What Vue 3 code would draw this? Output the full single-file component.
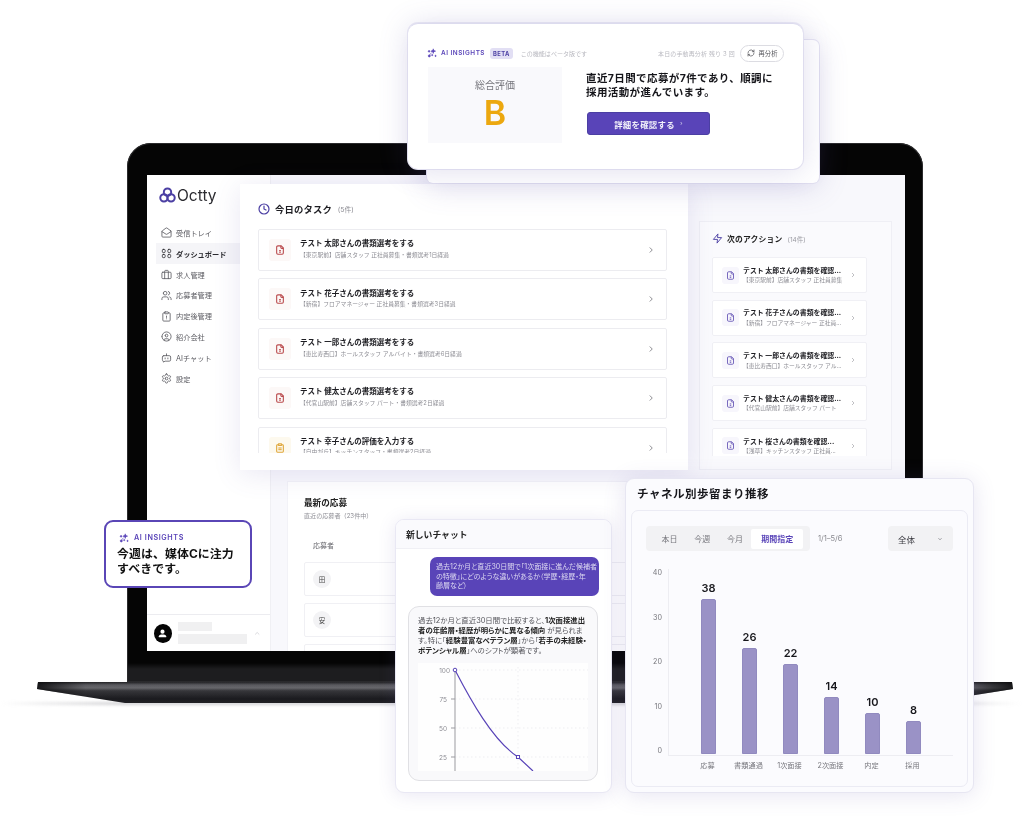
<script setup>
const icons = {
  inbox: ['M21.2 8.4c.5.38.8.97.8 1.6v10a2 2 0 0 1-2 2H4a2 2 0 0 1-2-2V10a2 2 0 0 1 .8-1.6l8-6a2 2 0 0 1 2.4 0l8 6Z', 'm22 10-8.97 5.7a1.94 1.94 0 0 1-2.06 0L2 10'],
  grid: ['M5 3h2a2 2 0 0 1 2 2v3a2 2 0 0 1-2 2H5a2 2 0 0 1-2-2V5a2 2 0 0 1 2-2Z', 'M17 3h2a2 2 0 0 1 2 2v3a2 2 0 0 1-2 2h-2a2 2 0 0 1-2-2V5a2 2 0 0 1 2-2Z', 'M5 14h2a2 2 0 0 1 2 2v3a2 2 0 0 1-2 2H5a2 2 0 0 1-2-2v-3a2 2 0 0 1 2-2Z', 'M17 14h2a2 2 0 0 1 2 2v3a2 2 0 0 1-2 2h-2a2 2 0 0 1-2-2v-3a2 2 0 0 1 2-2Z'],
  briefcase: ['M4 7h16a2 2 0 0 1 2 2v10a2 2 0 0 1-2 2H4a2 2 0 0 1-2-2V9a2 2 0 0 1 2-2Z', 'M16 21V5a2 2 0 0 0-2-2h-4a2 2 0 0 0-2 2v16'],
  users: ['M16 21v-2a4 4 0 0 0-4-4H6a4 4 0 0 0-4 4v2', 'M5 7a4 4 0 1 0 8 0a4 4 0 1 0-8 0', 'M22 21v-2a4 4 0 0 0-3-3.87', 'M16 3.13a4 4 0 0 1 0 7.75'],
  clipboard: ['M9 2h6a1 1 0 0 1 1 1v2a1 1 0 0 1-1 1H9a1 1 0 0 1-1-1V3a1 1 0 0 1 1-1Z', 'M16 4h2a2 2 0 0 1 2 2v14a2 2 0 0 1-2 2H6a2 2 0 0 1-2-2V6a2 2 0 0 1 2-2h2', 'M12 11v3', 'M12 17h.01'],
  company: ['M2 12a10 10 0 1 0 20 0a10 10 0 1 0-20 0', 'M9 10a3 3 0 1 0 6 0a3 3 0 1 0-6 0', 'M7 20.662V19a2 2 0 0 1 2-2h6a2 2 0 0 1 2 2v1.662'],
  bot: ['M6 8h12a3 3 0 0 1 3 3v6a3 3 0 0 1-3 3H9l-4 2v-2.2A3 3 0 0 1 3 17v-6a3 3 0 0 1 3-3Z', 'M12 8V4', 'M9 13v2', 'M15 13v2'],
  gear: ['M12.22 2h-.44a2 2 0 0 0-2 2v.18a2 2 0 0 1-1 1.73l-.43.25a2 2 0 0 1-2 0l-.15-.08a2 2 0 0 0-2.73.73l-.22.38a2 2 0 0 0 .73 2.73l.15.1a2 2 0 0 1 1 1.72v.51a2 2 0 0 1-1 1.74l-.15.09a2 2 0 0 0-.73 2.73l.22.38a2 2 0 0 0 2.73.73l.15-.08a2 2 0 0 1 2 0l.43.25a2 2 0 0 1 1 1.73V20a2 2 0 0 0 2 2h.44a2 2 0 0 0 2-2v-.18a2 2 0 0 1 1-1.73l.43-.25a2 2 0 0 1 2 0l.15.08a2 2 0 0 0 2.73-.73l.22-.39a2 2 0 0 0-.73-2.73l-.15-.08a2 2 0 0 1-1-1.74v-.5a2 2 0 0 1 1-1.74l.15-.09a2 2 0 0 0 .73-2.73l-.22-.38a2 2 0 0 0-2.73-.73l-.15.08a2 2 0 0 1-2 0l-.43-.25a2 2 0 0 1-1-1.73V4a2 2 0 0 0-2-2z', 'M9 12a3 3 0 1 0 6 0a3 3 0 1 0-6 0'],
  file: ['M15 2H7a3 3 0 0 0-3 3v14a3 3 0 0 0 3 3h10a3 3 0 0 0 3-3V7Z', 'M14 2v4a2 2 0 0 0 2 2h4', 'M10 13h4', 'M10 17h4'],
  clip: ['M9 2h6a1 1 0 0 1 1 1v2a1 1 0 0 1-1 1H9a1 1 0 0 1-1-1V3a1 1 0 0 1 1-1Z', 'M16 4h2a2 2 0 0 1 2 2v14a2 2 0 0 1-2 2H6a2 2 0 0 1-2-2V6a2 2 0 0 1 2-2h2', 'M8 12h8', 'M8 16h8'],
  clock: ['M2 12a10 10 0 1 0 20 0a10 10 0 1 0-20 0', 'M12 6v6l4 2'],
  bolt: ['M13 2 3 14h9l-1 8 10-12h-9l1-8z'],
  chevron: ['m9 18 6-6-6-6'],
  down: ['m6 9 6 6 6-6'],
  up: ['m6 15 6-6 6 6'],
  refresh: ['M3 12a9 9 0 0 1 15-6.7L21 8', 'M21 3v5h-5', 'M21 12a9 9 0 0 1-15 6.7L3 16', 'M8 16H3v5'],
}

const navItems = [
  { label: '受信トレイ', icon: 'inbox' },
  { label: 'ダッシュボード', icon: 'grid', active: true },
  { label: '求人管理', icon: 'briefcase' },
  { label: '応募者管理', icon: 'users' },
  { label: '内定後管理', icon: 'clipboard' },
  { label: '紹介会社', icon: 'company' },
  { label: 'AIチャット', icon: 'bot' },
  { label: '設定', icon: 'gear' },
]

const tasks = [
  { title: 'テスト 太郎さんの書類選考をする', sub: '【東京駅前】店舗スタッフ 正社員募集・書類選考1日経過', icon: 'file', tone: 'red' },
  { title: 'テスト 花子さんの書類選考をする', sub: '【新宿】フロアマネージャー 正社員募集・書類選考3日経過', icon: 'file', tone: 'red' },
  { title: 'テスト 一郎さんの書類選考をする', sub: '【恵比寿西口】ホールスタッフ アルバイト・書類選考6日経過', icon: 'file', tone: 'red' },
  { title: 'テスト 健太さんの書類選考をする', sub: '【代官山駅前】店舗スタッフ パート・書類選考2日経過', icon: 'file', tone: 'red' },
  { title: 'テスト 幸子さんの評価を入力する', sub: '【自由が丘】キッチンスタッフ・書類選考2日経過', icon: 'clip', tone: 'amber' },
]

const actions = [
  { title: 'テスト 太郎さんの書類を確認...', sub: '【東京駅前】店舗スタッフ 正社員募集' },
  { title: 'テスト 花子さんの書類を確認...', sub: '【新宿】フロアマネージャー 正社員...' },
  { title: 'テスト 一郎さんの書類を確認...', sub: '【恵比寿西口】ホールスタッフ アル...' },
  { title: 'テスト 健太さんの書類を確認...', sub: '【代官山駅前】店舗スタッフ パート' },
  { title: 'テスト 桜さんの書類を確認...', sub: '【浅草】キッチンスタッフ 正社員...' },
]

const applicants = ['田', '安', '']

const tabs = ['本日', '今週', '今月', '期間指定']
const yTicks = [40, 30, 20, 10, 0]
const funnel = [
  { label: '応募', value: 38 },
  { label: '書類通過', value: 26 },
  { label: '1次面接', value: 22 },
  { label: '2次面接', value: 14 },
  { label: '内定', value: 10 },
  { label: '採用', value: 8 },
]
const barHeight = (v) => Math.round(v * 4.08) + 'px'
</script>

<template>
  <div class="stage">
    <!-- laptop -->
    <div class="laptop">
      <div class="screen">
        <aside class="sidebar">
          <div class="logo">
            <svg width="17" height="16" viewBox="0 0 24 22" fill="none" stroke="#4b3fa3" stroke-width="2.800">
              <circle cx="12" cy="7" r="5.200" />
              <circle cx="7" cy="15" r="5.200" />
              <circle cx="17" cy="15" r="5.200" />
            </svg>
            <span>Octty</span>
          </div>
          <nav class="nav">
            <div v-for="item in navItems" :key="item.label" class="nav-item" :class="{ active: item.active }">
              <svg width="11" height="11" viewBox="0 0 24 24" fill="none" stroke="currentColor" stroke-width="1.800" stroke-linecap="round" stroke-linejoin="round">
                <path v-for="d in icons[item.icon]" :key="d" :d="d" />
              </svg>
              <span>{{ item.label }}</span>
            </div>
          </nav>
          <div class="side-user">
            <div class="avatar">
              <svg width="11" height="11" viewBox="0 0 24 24" fill="#fff">
                <circle cx="12" cy="8" r="4.500" />
                <path d="M4 20v-2c0-2 3-4 5-4h6c2 0 5 2 5 4v2Z" />
              </svg>
            </div>
            <div class="skeletons">
              <i class="sk-a"></i>
              <i class="sk-b"></i>
            </div>
            <svg class="user-chev" width="9" height="9" viewBox="0 0 24 24" fill="none" stroke="#c9c9cf" stroke-width="2">
              <path :d="icons.up[0]" />
            </svg>
          </div>
        </aside>

        <div class="main">
          <div class="main-top">
            <section class="next-panel">
              <div class="next-head">
                <svg width="11" height="11" viewBox="0 0 24 24" fill="none" stroke="#4b3fa3" stroke-width="2" stroke-linejoin="round">
                  <path :d="icons.bolt[0]" />
                </svg>
                <b>次のアクション</b>
                <small>(14件)</small>
              </div>
              <div class="next-list">
                <div v-for="a in actions" :key="a.title" class="next-row">
                  <span class="next-tile">
                    <svg width="9" height="9" viewBox="0 0 24 24" fill="none" stroke="#6a5ab8" stroke-width="2.400" stroke-linejoin="round">
                      <path v-for="d in icons.file" :key="d" :d="d" />
                    </svg>
                  </span>
                  <div class="next-text">
                    <b>{{ a.title }}</b>
                    <small>{{ a.sub }}</small>
                  </div>
                  <svg width="8" height="8" viewBox="0 0 24 24" fill="none" stroke="#a8a8ae" stroke-width="2.200">
                    <path :d="icons.chevron[0]" />
                  </svg>
                </div>
              </div>
            </section>
          </div>
          <section class="latest">
            <h4>最新の応募</h4>
            <p class="latest-sub">直近の応募者（23件中）</p>
            <p class="latest-col">応募者</p>
            <div v-for="(name, i) in applicants" :key="i" class="latest-row">
              <span v-if="name" class="latest-av">{{ name }}</span>
            </div>
          </section>
        </div>
      </div>
    </div>
    <div class="base-shadow"></div>
    <svg class="base" width="976" height="21" viewBox="0 0 976 21">
      <defs>
        <linearGradient id="baseFill" x1="0" y1="0" x2="0" y2="1">
          <stop offset="0" stop-color="#242426" />
          <stop offset=".14" stop-color="#5d5d62" />
          <stop offset=".28" stop-color="#6c6c70" />
          <stop offset=".42" stop-color="#38383c" />
          <stop offset=".8" stop-color="#1c1c20" />
          <stop offset="1" stop-color="#232327" />
        </linearGradient>
        <linearGradient id="baseFade" x1="0" y1="0" x2="1" y2="0">
          <stop offset="0" stop-color="#0a0a0c" stop-opacity=".85" />
          <stop offset=".05" stop-color="#0a0a0c" stop-opacity=".05" />
          <stop offset=".95" stop-color="#0a0a0c" stop-opacity=".05" />
          <stop offset="1" stop-color="#0a0a0c" stop-opacity=".85" />
        </linearGradient>
      </defs>
      <path d="M1 0H975L976 7L888 21H88L0 7Z" fill="url(#baseFill)" />
      <path d="M1 0H975L976 7L888 21H88L0 7Z" fill="url(#baseFade)" />
    </svg>

    <!-- today's tasks, overlapping the dashboard -->
    <section class="tasks">
      <header class="tasks-head">
        <svg width="12" height="12" viewBox="0 0 24 24" fill="none" stroke="#4b3fa3" stroke-width="2.400" stroke-linecap="round" stroke-linejoin="round">
          <path v-for="d in icons.clock" :key="d" :d="d" />
        </svg>
        <h3>今日のタスク</h3>
        <small>(5件)</small>
      </header>
      <div class="task-list">
        <div v-for="t in tasks" :key="t.title" class="task-row">
          <span class="task-tile" :class="t.tone">
            <svg width="10" height="10" viewBox="0 0 24 24" fill="none" stroke="currentColor" stroke-width="2.600" stroke-linejoin="round">
              <path v-for="d in icons[t.icon]" :key="d" :d="d" />
            </svg>
          </span>
          <div class="task-text">
            <b>{{ t.title }}</b>
            <small>{{ t.sub }}</small>
          </div>
          <svg width="10" height="10" viewBox="0 0 24 24" fill="none" stroke="#77777d" stroke-width="2">
            <path :d="icons.chevron[0]" />
          </svg>
        </div>
      </div>
    </section>

    <!-- AI insights card at top -->
    <div class="insight-back"></div>
    <section class="insight">
      <header class="insight-head">
        <svg width="10" height="10" viewBox="0 0 24 24" fill="#5944b8" stroke="#5944b8" stroke-width="1.500">
          <path d="M15 2c.5 3.500 1.800 4.800 5.500 5.500C16.800 8.200 15.500 9.500 15 13c-.5-3.500-1.800-4.800-5.500-5.500C13.200 6.800 14.500 5.500 15 2Z" />
          <path d="M3 8a2 2 0 1 0 4 0a2 2 0 1 0-4 0M3 19a2.500 2.500 0 1 0 5 0a2.500 2.500 0 1 0-5 0M11 17a1.500 1.500 0 1 0 3 0a1.500 1.500 0 1 0-3 0M19 19a1.500 1.500 0 1 0 3 0a1.500 1.500 0 1 0-3 0" />
          <path d="M6 17l5-6" fill="none" />
        </svg>
        <span class="ai-label">AI INSIGHTS</span>
        <span class="beta">BETA</span>
        <span class="beta-note">この機能はベータ版です</span>
        <span class="remain">本日の手動再分析 残り 3 回</span>
        <button class="re-btn">
          <svg width="8" height="8" viewBox="0 0 24 24" fill="none" stroke="#55555a" stroke-width="2.200" stroke-linecap="round" stroke-linejoin="round">
            <path v-for="d in icons.refresh" :key="d" :d="d" />
          </svg>
          再分析
        </button>
      </header>
      <div class="insight-body">
        <div class="grade">
          <span>総合評価</span>
          <strong>B</strong>
        </div>
        <div class="summary">
          <p>直近7日間で応募が7件であり、順調に<br />採用活動が進んでいます。</p>
          <button class="detail-btn">詳細を確認する<i>›</i></button>
        </div>
      </div>
    </section>

    <!-- tooltip over the laptop -->
    <aside class="tip">
      <div class="tip-head">
        <svg width="10" height="10" viewBox="0 0 24 24" fill="#5944b8" stroke="#5944b8" stroke-width="1.500">
          <path d="M15 2c.5 3.500 1.800 4.800 5.500 5.500C16.800 8.200 15.500 9.500 15 13c-.5-3.500-1.800-4.800-5.500-5.500C13.200 6.800 14.500 5.500 15 2Z" />
          <path d="M3 8a2 2 0 1 0 4 0a2 2 0 1 0-4 0M3 19a2.500 2.500 0 1 0 5 0a2.500 2.500 0 1 0-5 0M11 17a1.500 1.500 0 1 0 3 0a1.500 1.500 0 1 0-3 0M19 19a1.500 1.500 0 1 0 3 0a1.500 1.500 0 1 0-3 0" />
          <path d="M6 17l5-6" fill="none" />
        </svg>
        <span>AI INSIGHTS</span>
      </div>
      <p>今週は、媒体Cに注力<br />すべきです。</p>
    </aside>

    <!-- chat -->
    <section class="chat">
      <header class="chat-head">新しいチャット</header>
      <div class="chat-body">
        <div class="bubble">過去12か月と直近30日間で「1次面接に進んだ候補者<br />の特徴」にどのような違いがあるか（学歴・経歴・年<br />齢層など）</div>
        <div class="answer">
          <p>過去12か月と直近30日間で比較すると、<b>1次面接進出</b><br /><b>者の年齢層・経歴が明らかに異なる傾向</b> が見られま<br />す。特に「<b>経験豊富なベテラン層</b>」から「<b>若手の未経験・</b><br /><b>ポテンシャル層</b>」へのシフトが顕著です。</p>
          <svg class="mini-chart" width="170" height="108" viewBox="0 0 170 108">
            <g stroke="#eeeef1" stroke-width="1" stroke-dasharray="1.500 2.500">
              <path d="M37 7H170" />
              <path d="M37 36H170" />
              <path d="M37 65H170" />
              <path d="M37 94H170" />
              <path d="M100 4V108" />
            </g>
            <path d="M37 5V108" stroke="#9b9ba0" fill="none" />
            <g stroke="#9b9ba0"><path d="M33 36H37M33 65H37M33 94H37" /></g>
            <g class="mini-ticks">
              <text x="32" y="10" text-anchor="end">100</text>
              <text x="29" y="39" text-anchor="end">75</text>
              <text x="29" y="68" text-anchor="end">50</text>
              <text x="29" y="97" text-anchor="end">25</text>
            </g>
            <path d="M37 7C52 36 75 78 100 94L115 108" fill="none" stroke="#5944b8" stroke-width="1.200" />
            <circle cx="37" cy="7" r="1.800" fill="#fff" stroke="#5944b8" />
            <rect x="98.500" y="92.500" width="3" height="3" fill="#fff" stroke="#5944b8" />
          </svg>
        </div>
      </div>
    </section>

    <!-- funnel chart -->
    <section class="funnel">
      <h3>チャネル別歩留まり推移</h3>
      <div class="funnel-panel">
        <div class="funnel-tools">
          <div class="tabs">
            <span v-for="(tab, i) in tabs" :key="tab" class="tab" :class="{ on: i === 3 }">{{ tab }}</span>
          </div>
          <span class="range">1/1–5/6</span>
          <div class="select">
            <span>全体</span>
            <svg width="6" height="6" viewBox="0 0 24 24" fill="none" stroke="#77777d" stroke-width="3">
              <path :d="icons.down[0]" />
            </svg>
          </div>
        </div>
        <div class="plot-wrap">
          <div class="y-axis">
            <span v-for="y in yTicks" :key="y">{{ y }}</span>
          </div>
          <div class="plot-col">
            <div class="plot">
              <div v-for="b in funnel" :key="b.label" class="bar-col">
                <span class="bar-val">{{ b.value }}</span>
                <div class="bar" :style="{ height: barHeight(b.value) }"></div>
              </div>
            </div>
            <div class="x-axis">
              <span v-for="b in funnel" :key="b.label">{{ b.label }}</span>
            </div>
          </div>
        </div>
      </div>
    </section>
  </div>
</template>

<style>
html, body { margin: 0; background: #fff; }
</style>

<style scoped>
* { box-sizing: border-box; }

.stage {
  position: relative;
  width: 1022px;
  height: 816px;
  overflow: hidden;
  background: #fff;
  font-family: Inter, "Noto Sans CJK JP", sans-serif;
  color: #1b1b1f;
  filter: blur(.3px);
}
p, h3, h4 { margin: 0; }
small { font-weight: 400; }

/* laptop */
.laptop {
  position: absolute;
  left: 127px;
  top: 143px;
  width: 796px;
  height: 539px;
  padding: 32px 18px 31px 20px;
  border-radius: 24px 24px 0 0;
  background: linear-gradient(180deg, #050505 0, #050505 520px, #1d1d1f 526px, #1d1d1f 100%);
  box-shadow: inset 0 0 0 1px #2a2a2c;
}
.screen {
  display: flex;
  height: 100%;
  overflow: hidden;
  background: #f8f8fc;
}
.sidebar {
  position: relative;
  display: flex;
  flex-direction: column;
  width: 124px;
  flex: none;
  background: #fff;
  border-right: 1px solid #f0f0f4;
}
.logo {
  display: flex;
  align-items: center;
  gap: 1px;
  height: 40px;
  margin-bottom: 7.600px;
  padding-left: 12px;
  font-size: 15.500px;
  color: #2b2b30;
}
.nav { display: flex; flex-direction: column; padding-left: 9px; }
.nav-item {
  display: flex;
  align-items: center;
  gap: 4px;
  height: 20.800px;
  padding-left: 5px;
  font-size: 7.200px;
  color: #5b5b61;
}
.nav-item.active { width: 84px; background: #f5f5f8; color: #2a2a2f; font-weight: 700; }

.side-user {
  display: flex;
  align-items: center;
  gap: 6px;
  margin-top: auto;
  height: 37px;
  padding: 0 9px 0 7px;
  border-top: 1px solid #ececf0;
}
.avatar {
  display: grid;
  place-items: center;
  width: 19px;
  height: 19px;
  border-radius: 50%;
  background: #050505;
}
.skeletons { display: flex; flex-direction: column; gap: 3px; }
.skeletons i { display: block; background: #f0f0f1; }
.sk-a { width: 34px; height: 9px; }
.sk-b { width: 69px; height: 10px; }
.user-chev { margin-left: auto; }

.main { flex: 1; min-width: 0; position: relative; }
.main-top { display: flex; justify-content: flex-end; height: 307px; padding: 46px 13px 0 0; }
.next-panel {
  width: 193px;
  height: 249px;
  padding: 0 12px;
  border: 1px solid #efeff5;
  background: #fafafd;
  overflow: hidden;
}
.next-head {
  display: flex;
  align-items: center;
  gap: 4px;
  height: 37px;
  margin-bottom: -2px;
  padding-bottom: 4px;
  font-size: 7.800px;
  color: #222;
}
.next-head b { font-weight: 700; letter-spacing: .2px; }
.next-head small { font-size: 6.500px; color: #9b9ba2; margin-left: 1px; }
.next-list { display: flex; flex-direction: column; gap: 6.700px; height: 199px; overflow: hidden; }
.next-row {
  display: flex;
  align-items: center;
  flex: none;
  width: 155px;
  height: 36px;
  padding: 0 9px;
  border: 1px solid #f0f0f5;
  background: #fff;
  border-radius: 2px;
}
.next-tile {
  display: grid;
  place-items: center;
  flex: none;
  width: 17px;
  height: 17px;
  border-radius: 3px;
  background: #f7f6fc;
  margin-right: 4px;
}
.next-text { display: flex; flex-direction: column; flex: 1; min-width: 0; }
.next-text b { font-size: 6.900px; line-height: 9.500px; color: #1d1d22; white-space: nowrap; }
.next-text small { font-size: 5.750px; line-height: 9px; color: #8d8d94; white-space: nowrap; overflow: hidden; }

.latest {
  position: absolute;
  left: 17px;
  top: 307px;
  width: 520px;
  height: 180px;
  padding: 15px 16px 0;
  background: #fff;
  box-shadow: 0 0 0 1px #f2f2f7;
}
.latest h4 { font-size: 8.600px; line-height: 13px; font-weight: 700; color: #222; }
.latest-sub { font-size: 6.100px; line-height: 11px; color: #8d8d94; }
.latest-col { margin: 20px 0 11px 9px; font-size: 7px; line-height: 10px; color: #66666c; }
.latest-row {
  display: flex;
  align-items: center;
  height: 34px;
  margin-bottom: 7px;
  padding-left: 8px;
  border: 1px solid #f0f0f4;
  border-radius: 2px;
}
.latest-av {
  display: grid;
  place-items: center;
  width: 18px;
  height: 18px;
  border-radius: 50%;
  background: #f3f3f5;
  font-size: 6.500px;
  color: #444;
}

.base { position: absolute; left: 37px; top: 682px; }
.base-shadow {
  position: absolute;
  left: 0;
  right: 0;
  top: 702px;
  height: 3px;
  background: linear-gradient(90deg, rgba(170,170,175,0), rgba(170,170,175,.55) 12%, rgba(170,170,175,.55) 88%, rgba(170,170,175,0));
  filter: blur(1.500px);
}

/* tasks */
.tasks {
  position: absolute;
  left: 240px;
  top: 184px;
  width: 448px;
  height: 286px;
  padding: 0 21px 0 18px;
  background: #fff;
  box-shadow: 0 4px 26px rgba(98, 88, 170, .14);
}
.tasks-head {
  display: flex;
  align-items: center;
  gap: 5px;
  height: 45px;
  padding-top: 4px;
}
.tasks-head h3 { font-size: 9.400px; font-weight: 700; color: #1d1d22; letter-spacing: .1px; }
.tasks-head small { font-size: 6.800px; color: #8d8d94; margin-left: 1px; }
.task-list { display: flex; flex-direction: column; gap: 7.400px; height: 224px; overflow: hidden; }
.task-row {
  display: flex;
  align-items: center;
  flex: none;
  height: 42px;
  padding: 0 10px;
  border: 1px solid #ececf0;
  border-radius: 2px;
}
.task-tile {
  display: grid;
  place-items: center;
  flex: none;
  width: 22px;
  height: 22px;
  border-radius: 3px;
  margin-right: 9px;
}
.task-tile.red { background: #fcf8f7; color: #b9494c; }
.task-tile.amber { background: #fdf9ee; color: #dfa63a; }
.task-text { display: flex; flex-direction: column; flex: 1; margin-top: -2px; }
.task-text b { font-size: 7.500px; line-height: 10.500px; color: #1d1d22; }
.task-text small { font-size: 5.800px; line-height: 9px; color: #8d8d94; }

/* insight */
.insight-back {
  position: absolute;
  left: 427px;
  top: 40px;
  width: 392px;
  height: 143px;
  border-radius: 6px;
  background: #fff;
  box-shadow: 0 4px 30px rgba(98, 88, 170, .2), 0 0 0 1px #ecebf6;
}
.insight {
  position: absolute;
  left: 408px;
  top: 23px;
  width: 395px;
  height: 146px;
  padding: 20px 19px 0 19px;
  border-radius: 10px;
  background: #fff;
  border-top: 1px solid #dcdbee;
  box-shadow: 0 2px 30px rgba(98, 88, 170, .2), 0 0 0 1px #ecebf6;
}
.insight-head { display: flex; align-items: center; height: 18px; }
.ai-label { margin-left: 4px; font-size: 6.400px; font-weight: 600; letter-spacing: .5px; color: #5944b8; }
.beta {
  margin-left: 5px;
  padding: 0 3px;
  height: 11px;
  line-height: 11px;
  border-radius: 3px;
  background: #e2dff4;
  font-size: 5.800px;
  font-weight: 700;
  letter-spacing: .4px;
  color: #4b3fa3;
}
.beta-note { margin-left: 8px; font-size: 6.050px; color: #b9b9c0; }
.remain { margin-left: auto; font-size: 5.950px; color: #b9b9c0; letter-spacing: .2px; }
.re-btn {
  display: flex;
  align-items: center;
  justify-content: center;
  gap: 4px;
  width: 44px;
  height: 17px;
  margin-left: 5px;
  padding: 0;
  border: 1px solid #dcdce2;
  border-radius: 9px;
  background: #fff;
  font-family: inherit;
  font-size: 6.300px;
  color: #55555a;
}
.insight-body { display: flex; margin: 5px 0 0 1px; }
.grade {
  display: flex;
  flex-direction: column;
  align-items: center;
  width: 134px;
  height: 76px;
  background: #f9f9fc;
}
.grade span { margin-top: 10px; font-size: 10px; line-height: 16px; color: #77777d; }
.grade strong { margin-top: 3px; font-size: 34px; line-height: 34px; font-weight: 600; color: #eca80f; }
.summary { padding: 5px 0 0 24px; }
.summary p { font-size: 10.500px; line-height: 13.500px; font-weight: 700; letter-spacing: .4px; color: #15151a; }
.detail-btn {
  position: relative;
  display: block;
  width: 123px;
  height: 23px;
  margin: 13px 0 0 1px;
  padding: 0 8px 0 0;
  border: 1px solid #4b3fa3;
  border-radius: 3px;
  background: #5944b8;
  color: #f1f0fa;
  font-family: inherit;
  font-size: 8.400px;
  font-weight: 700;
  letter-spacing: .3px;
}
.detail-btn i { position: absolute; left: 92px; top: 6px; font-size: 6px; line-height: 8px; font-style: normal; color: #b8b1e0; }

/* tooltip */
.tip {
  position: absolute;
  left: 104px;
  top: 520px;
  width: 148px;
  height: 68px;
  padding: 9px 12px;
  border: 2px solid #5a46b6;
  border-radius: 9px;
  background: #fff;
}
.tip-head { display: flex; align-items: center; gap: 5px; margin-left: 1px; height: 13px; }
.tip-head span { font-size: 7.200px; font-weight: 600; letter-spacing: .6px; color: #5944b8; }
.tip p { margin-top: 2px; margin-left: -1px; font-size: 11.900px; line-height: 15px; font-weight: 700; color: #111; letter-spacing: .1px; }

/* chat */
.chat {
  position: absolute;
  left: 395px;
  top: 519px;
  width: 217px;
  height: 274px;
  overflow: hidden;
  border-radius: 9px;
  background: #fff;
  border: 1px solid #e9e8f4;
  box-shadow: 0 2px 18px rgba(98, 88, 170, .14);
}
.chat-head {
  display: flex;
  align-items: center;
  height: 29px;
  padding-left: 10px;
  background: #fafafd;
  border-bottom: 1px solid #f0f0f5;
  font-size: 8.800px;
  font-weight: 700;
  color: #222;
}
.chat-body { padding: 8px 12px 0; }
.bubble {
  width: 169px;
  height: 39px;
  margin-left: 22px;
  padding: 5px 6px 0;
  border-radius: 7px;
  background: #5944b8;
  font-size: 7.050px;
  line-height: 9.600px;
  color: #dcd8f1;
  white-space: nowrap;
  font-feature-settings: "palt";
}
.answer {
  width: 190px;
  height: 175px;
  margin: 10px 0 0;
  padding: 9px 9px 0;
  border: 1px solid #e0e0e4;
  border-radius: 11px;
  background: #f9f9fb;
  overflow: hidden;
}
.answer p {
  font-size: 7.400px;
  line-height: 10px;
  color: #55555b;
  white-space: nowrap;
  font-feature-settings: "palt";
}
.answer b { color: #222; font-weight: 700; }
.mini-chart { display: block; margin-top: 7px; background: #fefefe; }
.mini-ticks text { font-family: Inter, sans-serif; font-size: 6.500px; fill: #8d8d94; }

/* funnel */
.funnel {
  position: absolute;
  left: 625px;
  top: 478px;
  width: 349px;
  height: 315px;
  padding: 0 5px;
  border-radius: 9px;
  background: #fbfbfe;
  border: 1px solid #e7e6f2;
  box-shadow: 0 2px 22px rgba(98, 88, 170, .16);
}
.funnel h3 {
  height: 31px;
  padding: 8px 0 0 6px;
  font-size: 11.500px;
  line-height: 14px;
  font-weight: 700;
  letter-spacing: .5px;
  color: #17171c;
}
.funnel-panel {
  height: 277px;
  padding: 15px 14px 0;
  border: 1px solid #ebebf4;
  border-radius: 7px;
  background: #fbfbfe;
}
.funnel-tools { display: flex; align-items: center; height: 25px; }
.tabs {
  display: flex;
  align-items: center;
  width: 164px;
  height: 25px;
  padding: 0 7px;
  border-radius: 4px;
  background: #f2f2f4;
}
.tab {
  display: flex;
  align-items: center;
  justify-content: center;
  width: 33px;
  height: 20px;
  font-size: 8px;
  color: #77777d;
}
.tab.on {
  width: 52px;
  background: #fff;
  border-radius: 2px;
  color: #5944b8;
  font-weight: 700;
}
.range { margin-left: 8px; font-size: 7.500px; color: #88888e; }
.select {
  display: flex;
  align-items: center;
  justify-content: space-between;
  width: 65px;
  height: 25px;
  margin-left: auto;
  padding: 0 10px;
  border-radius: 4px;
  background: #f2f2f4;
  font-size: 8.500px;
  color: #3a3a40;
}
.plot-wrap { display: flex; margin-top: 18px; }
.y-axis {
  display: flex;
  flex-direction: column;
  justify-content: space-between;
  align-items: flex-end;
  width: 16px;
  height: 188px;
  margin-top: -1px;
  font-size: 7.200px;
  line-height: 10px;
  color: #77777d;
}
.plot-col { margin-left: 6px; width: 285px; }
.plot {
  display: flex;
  align-items: flex-end;
  height: 187px;
  padding: 0 0 1px 19px;
  border-left: 1px solid #ededf2;
  border-bottom: 1px solid #ededf2;
}
.bar-col {
  display: flex;
  flex-direction: column;
  align-items: center;
  width: 41px;
}
.bar-val { margin-bottom: 4px; font-size: 11px; line-height: 14px; font-weight: 600; color: #17171c; }
.bar {
  width: 15px;
  border: 1px solid #918abf;
  border-radius: 2px 2px 0 0;
  background: #9a92c6;
}
.x-axis { display: flex; padding-left: 19px; margin-top: 5px; }
.x-axis span { width: 41px; text-align: center; font-size: 7.200px; line-height: 10px; color: #77777d; white-space: nowrap; }
</style>
